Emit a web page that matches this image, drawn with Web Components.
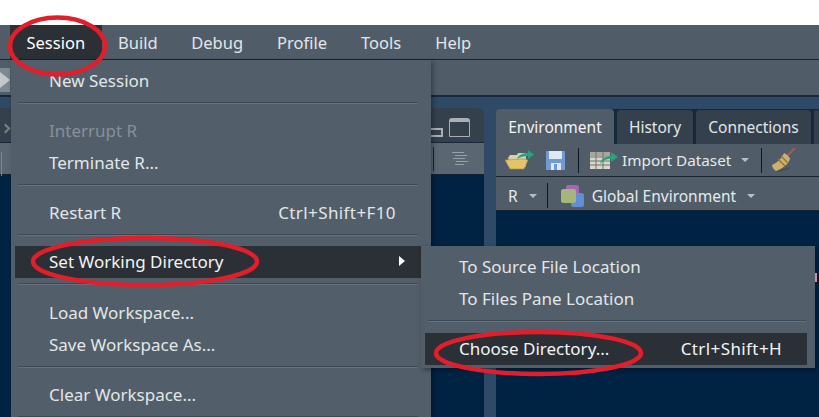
<!DOCTYPE html>
<html>
<head>
<meta charset="utf-8">
<title>RStudio session menu</title>
<style>
  html, body { margin: 0; height: 100%; background: #fff; overflow: hidden; }
  body { font: 16px "Noto Sans", sans-serif; color: #e6e9eb; }
</style>
</head>
<body>
<rs-app>
  <rs-menubar>
    <rs-top-item active>Session</rs-top-item>
    <rs-top-item>Build</rs-top-item>
    <rs-top-item>Debug</rs-top-item>
    <rs-top-item>Profile</rs-top-item>
    <rs-top-item>Tools</rs-top-item>
    <rs-top-item>Help</rs-top-item>
  </rs-menubar>
  <rs-main-toolbar></rs-main-toolbar>
  <rs-workbench>
    <rs-source-pane></rs-source-pane>
    <rs-env-pane></rs-env-pane>
  </rs-workbench>

  <rs-menu style="left:11px;top:60px;width:420px;height:357px;padding-right:10px">
    <rs-item>New Session</rs-item>
    <rs-sep></rs-sep>
    <rs-item disabled>Interrupt R</rs-item>
    <rs-item>Terminate R...</rs-item>
    <rs-sep></rs-sep>
    <rs-item shortcut="Ctrl+Shift+F10">Restart R</rs-item>
    <rs-sep style="margin-bottom:10px"></rs-sep>
    <rs-item selected arrow>Set Working Directory</rs-item>
    <rs-sep style="margin-bottom:12px"></rs-sep>
    <rs-item>Load Workspace...</rs-item>
    <rs-item>Save Workspace As...</rs-item>
    <rs-sep></rs-sep>
    <rs-item>Clear Workspace...</rs-item>
    <rs-sep></rs-sep>
  </rs-menu>

  <rs-menu style="left:421px;top:246px;width:394px;height:122px;padding-right:8px">
    <rs-item>To Source File Location</rs-item>
    <rs-item>To Files Pane Location</rs-item>
    <rs-sep style="margin-bottom:11px;margin-right:1px"></rs-sep>
    <rs-item selected shortcut="Ctrl+Shift+H">Choose Directory...</rs-item>
  </rs-menu>

  <rs-annotations></rs-annotations>
</rs-app>

<script>
const icons = {
  folder: `<svg width="30" height="20" viewBox="0 0 30 20">
    <path d="M3 8 L5 5 L12 5 L13 3 L21 3 L21 17 L6 17Z" fill="#d8cfae"/>
    <path d="M0 10 L19 9 L23 10 L19 19 L5 19Z" fill="#e3c46a" stroke="#a98c45" stroke-width=".6"/>
    <path d="M12 9 C14 4 19 3 23 3 L23 0 L29 4.500 L23 9 L23 6 C19 6 15 7 12 9Z" fill="#2aa27c"/>
  </svg>`,
  save: `<svg width="19" height="20" viewBox="0 0 19 20">
    <path d="M0 1 H19 V20 H0Z" fill="#6f9bd0"/>
    <path d="M3 1 H16 V9 H3Z" fill="#dfe8f2"/>
    <path d="M5 13 H15 V20 H5Z" fill="#dfe8f2"/>
    <path d="M8 14 H11 V20 H8Z" fill="#6f9bd0"/>
  </svg>`,
  table: `<svg width="28" height="19" viewBox="0 0 28 19">
    <path d="M0 1 H20 V18 H0Z" fill="#d9d6cc"/>
    <path d="M0 1 H20 V5 H0Z" fill="#a9a69b"/>
    <path d="M0 6 H20 M0 10 H20 M0 14 H20 M6 1 V18 M13 1 V18" stroke="#6f7270" stroke-width="1" fill="none"/>
    <path d="M10 13 C11 7 17 5 21 5 L21 1 L28 6 L21 11 L21 8 C17 8 13 9 10 13Z" fill="#2aa27c"/>
  </svg>`,
  broom: `<svg width="24" height="24" viewBox="0 0 24 24">
    <path d="M14 9 L23 0" stroke="#b5534a" stroke-width="2"/>
    <path d="M12 5 C14 6 18 9 18 11 C16 17 9 21 4 23 C2 22 0 19 0 17 C5 15 10 10 12 5Z" fill="#cdb06c"/>
    <path d="M6 11 L13 18 M9 8 L15.500 14.500" stroke="#96702f" stroke-width="1.300"/>
    <path d="M5 24 L18 20" stroke="#3f4a54" stroke-width="1.500" opacity=".7"/>
  </svg>`,
  layers: `<svg width="24" height="22" viewBox="0 0 24 22">
    <rect x="5" y="0" width="13" height="13" rx="2.500" fill="#a368b5"/>
    <rect x="10" y="8" width="13" height="14" rx="2.500" fill="#5f8fd6"/>
    <rect x="0" y="4" width="15" height="14" rx="2.500" fill="#a6b57a"/>
  </svg>`
};

// small base class, every element just sets css + html in its shadow
class RsBase extends HTMLElement {
  static css = '';
  static html = '<slot></slot>';
  constructor() {
    super();
    this.attachShadow({mode: 'open'});
    this.shadowRoot.innerHTML = `<style>${this.constructor.css}</style>${this.render()}`;
  }
  render() {
    return this.constructor.html;
  }
}

class RsApp extends RsBase {
  static css = `
    :host { display: flex; flex-direction: column; position: relative; width: 819px; height: 417px; padding-top: 25px; box-sizing: border-box; overflow: hidden; background: #2f4a66; }
    :host::before { content: ''; position: absolute; left: 0; right: 0; top: 0; height: 25px; background: #fff; }
  `;
}
customElements.define('rs-app', RsApp);

class RsMenubar extends RsBase {
  static css = `
    :host { display: flex; height: 34px; flex: none; padding-left: 10px; background: #505d68; border-bottom: 1px solid #17232e; }
  `;
}
customElements.define('rs-menubar', RsMenubar);

class RsTopItem extends RsBase {
  static css = `
    :host { display: flex; align-items: center; padding: 1px 16.500px 0; font-size: 16.500px; color: #e3e6e8; }
    :host(:nth-child(n+3)) { padding: 1px 17px 0; }
    :host([active]) { background: #2b3036; color: #fff; }
  `;
}
customElements.define('rs-top-item', RsTopItem);

class RsMainToolbar extends RsBase {
  static css = `
    :host { display: block; flex: none; height: 35px; background: #505d68; border-bottom: 2px solid #17283a; position: relative; }
    .arrow { position: absolute; left: 0; top: 8px; width: 10px; height: 24px; background: #7d8892; }
    .arrow::after { content: ''; position: absolute; left: 0; top: 4px; border: 8px solid transparent; border-left: 10px solid #c3c8cc; border-right: 0; }
  `;
  static html = '<div class="arrow"></div>';
}
customElements.define('rs-main-toolbar', RsMainToolbar);

class RsWorkbench extends RsBase {
  static css = `
    :host { display: flex; flex: 1; min-height: 0; padding-top: 11px; gap: 12px; }
  `;
}
customElements.define('rs-workbench', RsWorkbench);

class RsSourcePane extends RsBase {
  static css = `
    :host { display: flex; flex-direction: column; width: 484px; flex: none; position: relative; }
    .tabs { height: 35px; background: #34414d; border-top-right-radius: 6px; border-bottom: 1px solid #17283a; display: flex; align-items: flex-end; justify-content: flex-end; padding: 0 14px 5px 0; gap: 6px; box-sizing: border-box; }
    .tool { height: 31px; background: #5a6773; display: flex; align-items: center; justify-content: flex-end; padding-right: 16px; border-bottom: 1px solid #122234; }
    .rest { flex: 1; background: #002344; }
    .chev { position: absolute; left: 2px; top: 17px; width: 5px; height: 5px; border: solid #75818b; border-width: 2px 2px 0 0; transform: rotate(45deg); }
    .side { position: absolute; left: 1px; top: 44px; width: 1px; height: 24px; background: #7b8690; }
    .min { width: 30px; height: 9px; box-sizing: border-box; border: 2px solid #a8afb5; border-radius: 3px 0 0 0; }
    .max { width: 21px; height: 19px; box-sizing: border-box; border: 1px solid #a8afb5; border-top-width: 4px; border-radius: 3px 3px 1px 1px; }
    .vr { width: 1px; height: 24px; background: #1b2630; margin-right: 17px; }
    svg { display: block; }
  `;
  static html = `
    <div class="chev"></div>
    <div class="side"></div>
    <div class="tabs"><div class="min"></div><div class="max"></div></div>
    <div class="tool"><div class="vr"></div>
      <svg width="17" height="14" viewBox="0 0 17 14"><path d="M1 .5H13M4 3.500H16M2 6.500H14M5 9.500H17M4 12.500H13" stroke="#98a1a9" stroke-width="1"/></svg>
    </div>
    <div class="rest"></div>`;
}
customElements.define('rs-source-pane', RsSourcePane);

class RsTab extends RsBase {
  static css = `
    :host { display: flex; align-items: center; justify-content: center; box-sizing: border-box; height: 34px; margin-top: 1px; background: #34414d; border-radius: 4px 4px 0 0; font-size: 15.500px; color: #e3e6e8; }
    :host([active]) { background: #505d68; height: 35px; margin-top: 0; color: #f2f4f5; }
  `;
}
customElements.define('rs-tab', RsTab);

class RsEnvPane extends RsBase {
  static css = `
    :host { display: flex; flex-direction: column; flex: 1; min-width: 0; margin-top: 1px; }
    .tabs { height: 35px; display: flex; gap: 3px; background: #17283a; border-radius: 5px 0 0 0; flex: none; }
    .tool { height: 32px; flex: none; background: #505d68; display: flex; align-items: center; border-bottom: 1px solid #17232e; font-size: 15.300px; color: #e6e9eb; }
    .tool.two { font-size: 15.500px; padding-top: 4px; height: 29px; }
    .rest { flex: 1; background: #002344; }
    .caret { width: 0; height: 0; border: 4px solid transparent; border-top: 4px solid #b9bfc4; border-bottom: 0; }
    .vr { width: 1px; height: 25px; background: #10181f; }
    svg { display: block; flex: none; }
  `;
  render() {
    return `
    <div class="tabs">
      <rs-tab active style="width:118px">Environment</rs-tab>
      <rs-tab style="width:76px">History</rs-tab>
      <rs-tab style="width:115px">Connections</rs-tab>
      <rs-tab style="flex:1"></rs-tab>
    </div>
    <div class="tool">
      <span style="margin-left:9px">${icons.folder}</span>
      <span style="margin-left:11px">${icons.save}</span>
      <span class="vr" style="margin-left:13px"></span>
      <span style="margin-left:11px">${icons.table}</span>
      <span style="margin-left:4px">Import Dataset</span>
      <span class="caret" style="margin-left:10px"></span>
      <span class="vr" style="margin-left:12px"></span>
      <span style="margin-left:10px">${icons.broom}</span>
    </div>
    <div class="tool two">
      <span style="margin-left:12px">R</span>
      <span class="caret" style="margin-left:11px"></span>
      <span class="vr" style="margin-left:10px"></span>
      <span style="margin-left:13px">${icons.layers}</span>
      <span style="margin-left:7px">Global Environment</span>
      <span class="caret" style="margin-left:11px"></span>
    </div>
    <div class="rest"></div>`;
  }
}
customElements.define('rs-env-pane', RsEnvPane);

class RsMenu extends RsBase {
  static css = `
    :host { display: flex; flex-direction: column; position: absolute; box-sizing: border-box; background: #525e69; padding: 5px 10px 0 4px; box-shadow: 2px 2px 5px rgba(0,0,0,.35); overflow: hidden; font-size: 17px; }
  `;
}
customElements.define('rs-menu', RsMenu);

class RsItem extends RsBase {
  static css = `
    :host { display: flex; align-items: center; justify-content: space-between; flex: none; height: 32px; box-sizing: border-box; padding: 0 25px 2px 34px; color: #e3e6e8; white-space: nowrap; }
    :host([disabled]) { color: #87909a; }
    :host([selected]) { background: #2b3036; color: #f2f4f5; }
    .sc { letter-spacing: .4px; }
    .arrow { width: 0; height: 0; border: 5px solid transparent; border-left: 6px solid #fff; border-right: 0; margin-right: -9px; }
  `;
  render() {
    const sc = this.getAttribute('shortcut');
    return `<slot></slot>${sc ? `<span class="sc">${sc}</span>` : ''}${this.hasAttribute('arrow') ? '<span class="arrow"></span>' : ''}`;
  }
}
customElements.define('rs-item', RsItem);

class RsSep extends RsBase {
  static css = `
    :host { display: block; flex: none; height: 2px; margin: 5px 3px 11px 3px; background: #3c4853; border-bottom: 1px solid #66717b; box-sizing: border-box; }
  `;
  static html = '';
}
customElements.define('rs-sep', RsSep);

class RsAnnotations extends RsBase {
  static css = `
    :host { display: block; position: absolute; inset: 0; pointer-events: none; }
    svg { display: block; }
  `;
  static html = `<svg width="819" height="417" fill="none" stroke="#e31e2b" stroke-width="4.500">
    <ellipse cx="57.500" cy="46" rx="47.500" ry="28.500"/>
    <ellipse cx="145" cy="261.500" rx="112" ry="23.500"/>
    <ellipse cx="538.500" cy="353" rx="102.500" ry="21"/>
    <rect x="815" y="273" width="2" height="9" fill="#d98a8a" stroke="none"/>
  </svg>`;
}
customElements.define('rs-annotations', RsAnnotations);
</script>
</body>
</html>
